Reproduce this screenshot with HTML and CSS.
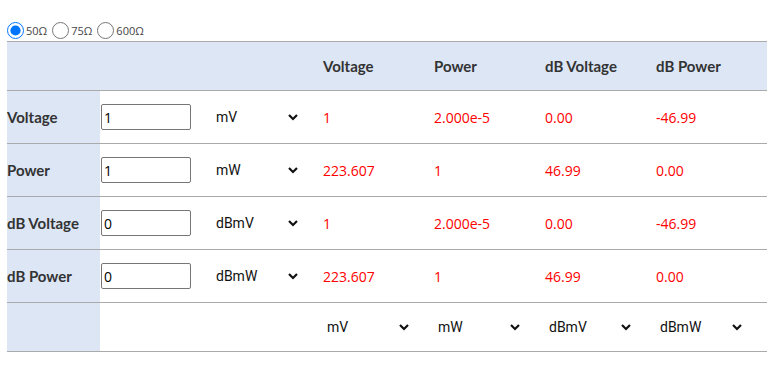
FILE: index.html
```html
<!DOCTYPE html>
<html lang="en">

<head>
    <meta charset="UTF-8">
    <meta name="viewport" content="width=device-width, initial-scale=1.0">
    <title>Voltage / Power Converter</title>
    <link rel="stylesheet" href="styles.css">
</head>

<body>
    <div id="page">
        <div id="impedance">
            <label class="ohm"><input type="radio" name="imp" checked>50Ω</label>
            <label class="ohm"><input type="radio" name="imp">75Ω</label>
            <label class="ohm"><input type="radio" name="imp">600Ω</label>
        </div>

        <table id="calc">
            <colgroup>
                <col style="width:93px">
                <col style="width:100px">
                <col style="width:113px">
                <col style="width:111px">
                <col style="width:111px">
                <col style="width:111px">
                <col style="width:121px">
            </colgroup>
            <tr class="head">
                <th class="side"></th>
                <th></th>
                <th></th>
                <th>Voltage</th>
                <th>Power</th>
                <th>dB Voltage</th>
                <th>dB Power</th>
            </tr>
            <tr>
                <th class="side">Voltage</th>
                <td><input class="num" type="text" value="1"></td>
                <td><div class="unit"><span>mV</span><svg width="12" height="8" viewBox="0 0 12 8"><path d="M2 2 L6 6 L10 2" /></svg></div></td>
                <td class="val">1</td>
                <td class="val">2.000e-5</td>
                <td class="val">0.00</td>
                <td class="val">-46.99</td>
            </tr>
            <tr>
                <th class="side">Power</th>
                <td><input class="num" type="text" value="1"></td>
                <td><div class="unit"><span>mW</span><svg width="12" height="8" viewBox="0 0 12 8"><path d="M2 2 L6 6 L10 2" /></svg></div></td>
                <td class="val">223.607</td>
                <td class="val">1</td>
                <td class="val">46.99</td>
                <td class="val">0.00</td>
            </tr>
            <tr>
                <th class="side">dB Voltage</th>
                <td><input class="num" type="text" value="0"></td>
                <td><div class="unit"><span>dBmV</span><svg width="12" height="8" viewBox="0 0 12 8"><path d="M2 2 L6 6 L10 2" /></svg></div></td>
                <td class="val">1</td>
                <td class="val">2.000e-5</td>
                <td class="val">0.00</td>
                <td class="val">-46.99</td>
            </tr>
            <tr>
                <th class="side">dB Power</th>
                <td><input class="num" type="text" value="0"></td>
                <td><div class="unit"><span>dBmW</span><svg width="12" height="8" viewBox="0 0 12 8"><path d="M2 2 L6 6 L10 2" /></svg></div></td>
                <td class="val">223.607</td>
                <td class="val">1</td>
                <td class="val">46.99</td>
                <td class="val">0.00</td>
            </tr>
            <tr class="foot">
                <th class="side"></th>
                <td></td>
                <td></td>
                <td><div class="unit out"><span>mV</span><svg width="12" height="8" viewBox="0 0 12 8"><path d="M2 2 L6 6 L10 2" /></svg></div></td>
                <td><div class="unit out"><span>mW</span><svg width="12" height="8" viewBox="0 0 12 8"><path d="M2 2 L6 6 L10 2" /></svg></div></td>
                <td><div class="unit out"><span>dBmV</span><svg width="12" height="8" viewBox="0 0 12 8"><path d="M2 2 L6 6 L10 2" /></svg></div></td>
                <td><div class="unit out"><span>dBmW</span><svg width="12" height="8" viewBox="0 0 12 8"><path d="M2 2 L6 6 L10 2" /></svg></div></td>
            </tr>
        </table>
    </div>
</body>

</html>
```

FILE: styles.css
```css
* {
    margin: 0;
    padding: 0;
    box-sizing: border-box;
}

body {
    font-family: "Lato", "Open Sans", sans-serif;
    color: #333;
    background-color: #fff;
}

#page {
    padding: 20px 0 0 7px;
}

#impedance {
    display: flex;
    align-items: center;
    height: 21px;
}

.ohm {
    display: flex;
    align-items: center;
    font-family: "Open Sans", sans-serif;
    font-size: 11px;
    color: #444;
}

.ohm + .ohm {
    margin-left: 5px;
}

.ohm input {
    width: 17px;
    height: 17px;
    margin: 0 2px 0 0;
    accent-color: #0075ff;
}

#calc {
    width: 760px;
    table-layout: fixed;
    border-collapse: collapse;
    border-top: 1px solid #aaa;
}

#calc tr {
    height: 53px;
    border-bottom: 1px solid #aaa;
}

#calc tr.head,
#calc tr.foot {
    height: 49px;
}

#calc th,
#calc td {
    text-align: left;
    vertical-align: middle;
    font-size: 14px;
}

#calc th {
    font-weight: 700;
    font-size: 15px;
    padding-left: 10px;
}

.head {
    background-color: #dce6f5;
}

#calc th.side {
    background-color: #dce6f5;
    padding-left: 0;
}

.val {
    color: #f00;
    padding-left: 10px;
    font-family: "Open Sans", sans-serif;
    font-size: 13px;
}

.num {
    width: 90px;
    height: 26px;
    margin-left: 1px;
    border: 1px solid #767676;
    border-radius: 2px;
    padding: 0 2px;
    font-family: "Open Sans", sans-serif;
    font-size: 14px;
    color: #000;
}

.unit {
    width: 97px;
    margin-left: 8px;
    padding: 0 6px 0 8px;
    display: flex;
    justify-content: space-between;
    align-items: center;
    font-family: "Roboto", sans-serif;
    font-size: 14px;
    color: #111;
}

.unit.out {
    margin-left: 6px;
}

.unit svg path {
    fill: none;
    stroke: #111;
    stroke-width: 2.2;
}
```
